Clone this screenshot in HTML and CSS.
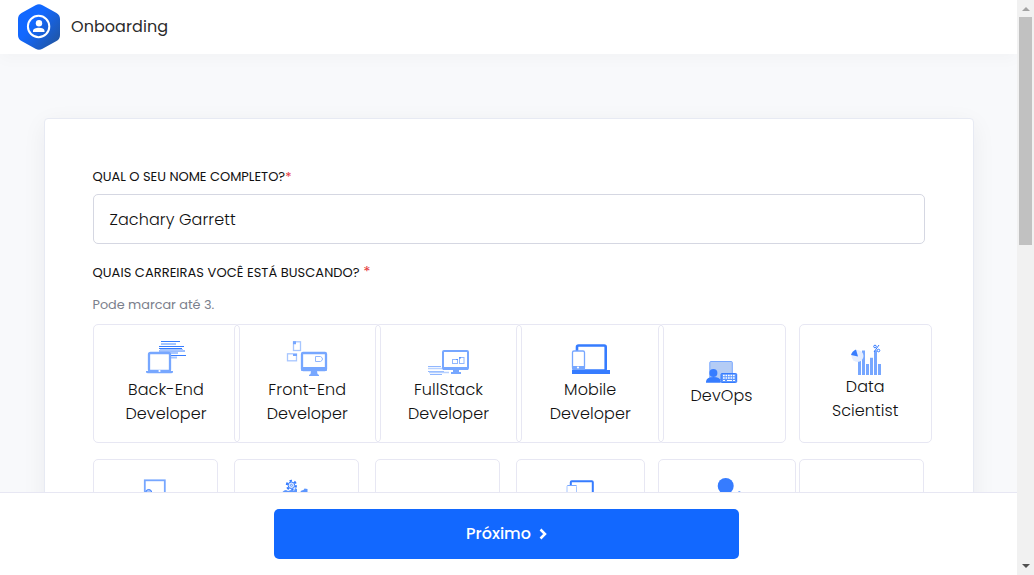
FILE: index.html
```html
<!DOCTYPE html>
<html lang="pt-BR">
<head>
<meta charset="utf-8">
<title>Onboarding</title>
<link rel="stylesheet" href="styles.css">
</head>
<body>
<div class="window">
  <div class="page">
    <header class="header">
      <svg class="logo" width="42" height="46" viewBox="0 0 42 46">
        <defs><linearGradient id="hex" x1="0.2" y1="0.2" x2="1" y2="0.9"><stop offset="0.25" stop-color="#1268ff"/><stop offset="1" stop-color="#22549c"/></linearGradient></defs>
        <path d="M17.5 1.3Q21 -.7 24.500 1.300L38.500 9Q42 11 42 15V31Q42 35 38.500 37L24.500 44.700Q21 46.700 17.500 44.700L3.500 37Q0 35 0 31V15Q0 11 3.500 9Z" fill="url(#hex)"/>
        <circle cx="20.600" cy="22.500" r="10.700" fill="none" stroke="#fff" stroke-width="2"/>
        <circle cx="21" cy="19.300" r="3.200" fill="#fff"/>
        <path d="M15 28v-1.300c0-2 3-3 6-3s5.500 1 5.500 3V28z" fill="#fff"/>
      </svg>
      <h1 class="title">Onboarding</h1>
    </header>
    <main class="main">
      <form class="panel">
        <label class="label name-label">QUAL O SEU NOME COMPLETO?<span class="required">*</span></label>
        <div class="input"><span class="input-text">Zachary Garrett</span></div>
        <div class="label career-label">QUAIS CARREIRAS VOCÊ ESTÁ BUSCANDO? <span class="required star">*</span></div>
        <p class="hint">Pode marcar até 3.</p>
        <div class="careers">
          <div class="card wide">
            <svg width="45" height="37" viewBox="144 341 45 37">
              <path d="M161 341.500h19M159 346.500h25M159 348.500h23M159 351h26M170 355.500h16" stroke="#367cff" stroke-width="1"/>
              <path d="M161 344h15M160 350h23M168 353h10M170 357.500h7" stroke="#a7c6ff" stroke-width="1.800"/>
              <rect x="149" y="353" width="21" height="18" rx="1.500" fill="#fff" stroke="#77a7ff" stroke-width="2.300"/>
              <path d="M146 371h27v1q0 1.300-2 1.300h-23q-2 0-2-1.300z" fill="#77a7ff"/><circle cx="159.500" cy="371" r="1.100" fill="#fff"/>
            </svg>
            <span class="name"><span>Back-End</span><span>Developer</span></span>
          </div>
          <div class="card wide">
            <svg width="45" height="37" viewBox="285 341 45 37">
              <g fill="none" stroke="#a7c6ff" stroke-width="1.300"><rect x="293.500" y="341.800" width="7" height="8.700"/><rect x="287.500" y="353.800" width="9" height="7"/></g>
              <path d="M293 341.300h3v3h-3zM293 354h4v2h-4z" fill="#77a7ff"/>
              <rect x="302" y="353" width="24" height="17" rx="1" fill="#fff" stroke="#77a7ff" stroke-width="2.300"/>
              <path d="M301 367h26v3q0 1-1 1h-24q-1 0-1-1zM311 371h6l.5 3 1.500 1v1h-10v-1l1.500-1z" fill="#77a7ff"/>
              <path d="M315.500 356.500h5q2 1 2 2.500t-2 2.500h-5z" fill="#fff" stroke="#91b7ff"/>
            </svg>
            <span class="name"><span>Front-End</span><span>Developer</span></span>
          </div>
          <div class="card wide">
            <svg width="45" height="37" viewBox="426 341 45 37">
              <path d="M428 366.500h13M428 371.500h16M430 374.500h12" stroke="#91b7ff"/><path d="M428 368.500h19M429 372.500h20" stroke="#b8d1ff" stroke-width="1.400"/>
              <rect x="443" y="351" width="25" height="18" rx="1" fill="#fff" stroke="#77a7ff" stroke-width="2"/>
              <path d="M443 367h25v3h-25zM453 370h6v2h2v2h-10v-2h2z" fill="#77a7ff"/>
              <g fill="none" stroke="#91b7ff"><rect x="452.500" y="359.500" width="5" height="4"/><rect x="459.500" y="357.500" width="4.500" height="6"/></g><path d="M456 359h2v1h-2zM459 357h2v1.500h-2z" fill="#5b96ff"/>
            </svg>
            <span class="name"><span>FullStack</span><span>Developer</span></span>
          </div>
          <div class="card wider">
            <svg width="45" height="37" viewBox="568 340.500 45 37">
              <rect x="577" y="345" width="28.700" height="25" rx="1.500" fill="#fff" stroke="#367cff" stroke-width="2.600"/><path d="M572 369.500h38v4h-38z" fill="#367cff"/>
              <rect x="572.500" y="350.500" width="12" height="18" rx="1.500" fill="#fff" stroke="#77a7ff" stroke-width="1.300"/><path d="M572 365.500h13v3q0 1-1 1h-11q-1 0-1-1z" fill="#77a7ff"/><circle cx="578" cy="367" r="1.100" fill="#fff"/>
            </svg>
            <span class="name"><span>Mobile</span><span>Developer</span></span>
          </div>
          <div class="card devops">
            <svg width="45" height="25" viewBox="699 359 45 25">
              <rect x="709.800" y="361.500" width="22.500" height="18" rx="1" fill="#b4ccf5" stroke="#77a7ff"/><circle cx="713.400" cy="373" r="4" fill="#367cff"/><path d="M706 382.700v-1.500q1-4.200 7.500-4.200t7.200 4.200v1.500z" fill="#367cff"/>
              <rect x="721" y="373.500" width="15.700" height="9" rx="1" fill="#5b96ff" stroke="#367cff"/><path d="M723 375.500h12M723 378h12" stroke="#fff" stroke-width="1.700" stroke-dasharray="1.700 .8"/><path d="M723 380.500h2M727 380.500h5M733 380.500h2" stroke="#fff" stroke-width="1.200"/>
            </svg>
            <span class="name"><span>DevOps</span></span>
          </div>
          <div class="card data">
            <svg width="45" height="31" viewBox="843 344 45 31">
              <path d="M858 360h3v15H858zM862 350.500h3V375h-3zM866 364h3v11H866zM870 357.700h3V375H870zM874 350.500h3V375h-3zM878 364h3v11H878z" fill="#77a7ff"/><circle cx="857.500" cy="356" r="6" fill="#e4edff"/><path d="M858 356.500l-7-1.500q1-4 5-5.500z" fill="#367cff"/>
              <path d="M879 345l-5 7" stroke="#367cff"/><g fill="none" stroke="#367cff"><circle cx="875" cy="346.500" r="1.300"/><circle cx="878.500" cy="350.500" r="1.300"/></g>
            </svg>
            <span class="name"><span>Data</span><span>Scientist</span></span>
          </div>
          <div class="card lower"><svg width="45" height="33" viewBox="133 476 45 33"><rect x="144.800" y="480.300" width="20" height="18" fill="#fff" stroke="#77a7ff" stroke-width="1.800"/><circle cx="148.700" cy="492.500" r="3" fill="#a7c6ff" stroke="#367cff"/></svg></div>
          <div class="card lower"><svg width="45" height="33" viewBox="274 476 45 33"><circle cx="291.400" cy="485.300" r="4.600" fill="none" stroke="#367cff" stroke-width="2" stroke-dasharray="2.400 2.417"/><circle cx="291.400" cy="485.300" r="3.300" fill="#d8e6ff" stroke="#367cff"/><circle cx="291.400" cy="485.300" r="1" fill="#fff" stroke="#367cff" stroke-width=".7"/><path d="M282 492.500q2-2.500 4-2.500l2 1 3-1 3 1 1-3 2 1v4h-15zM300 492.500q1-2.500 3.500-2.500l1-1.500 3 .5v4h-3l-1-1-1 1z" fill="#5b96ff"/></svg></div>
          <div class="card lower"></div>
          <div class="card lower lower-mobile"><svg width="45" height="33" viewBox="557.500 476 45 33"><rect x="570.300" y="481.300" width="22" height="18" rx="1" fill="#fff" stroke="#367cff" stroke-width="2"/><rect x="566.500" y="485.500" width="9.500" height="15" rx="1" fill="#fff" stroke="#a7c6ff"/><path d="M567 485.500h9" stroke="#77a7ff"/></svg></div>
          <div class="card lower lower-person"><svg width="45" height="33" viewBox="703.500 476 45 33"><circle cx="725.200" cy="486" r="8" fill="#367cff"/><path d="M737 492.500q2-3 3.500 0z" fill="#77a7ff"/></svg></div>
          <div class="card lower"></div>
        </div>
      </form>
    </main>
    <footer class="footer">
      <button class="next"><span class="next-text">Próximo</span><svg width="8" height="12" viewBox="0 0 8 12"><path d="M1.500 1.500L6 6l-4.500 4.500" fill="none" stroke="#fff" stroke-width="2.500"/></svg></button>
    </footer>
  </div>
  <div class="scrollbar"><span class="arrow up"></span><span class="thumb"></span><span class="arrow down"></span></div>
</div>
</body>
</html>
```
FILE: styles.css
```css
* { box-sizing: border-box; }
body { margin: 0; font-family: Poppins, Inter, "Open Sans", sans-serif; font-size: 16px; font-weight: 300; color: #161c2d; }
.window { display: flex; width: 1034px; height: 575px; overflow: hidden; }
.page { display: flex; flex-direction: column; width: 1017px; height: 575px; background: #f8f9fb; }
.header { display: flex; flex: none; align-items: center; gap: 11px; height: 54px; padding-left: 18px; background: #fff; box-shadow: 0 6px 14px rgba(22, 28, 45, .025); }
.title { margin: 0; font-size: 16px; line-height: 24px; font-weight: 400; color: #2b2b2b; letter-spacing: .06px; }
.main { height: 438px; padding: 64px 43.500px 0 43.500px; overflow: hidden; }
.panel { height: 700px; padding: 48px; background: #fff; border: 1px solid #e7eaf3; border-radius: 4px; box-shadow: 0 6px 24px rgba(22, 28, 45, .06); }
.label { display: block; font-size: 13px; line-height: 20px; font-weight: 400; color: #111; white-space: nowrap; }
.name-label { letter-spacing: -.02px; }
.career-label { letter-spacing: .045px; }
.required { color: #e5383b; }
.star { font-size: 15px; }
.input { display: flex; align-items: center; height: 50px; margin: 7px 0 18px; padding: 0 16px; border: 1px solid #d5d7e2; border-radius: 5px; color: #111; }
.input-text { letter-spacing: .08px; }
.hint { margin: 12px 0 9px; font-size: 12.800px; line-height: 20px; font-weight: 400; color: #7b808c; }
.careers { display: grid; grid-template-columns: repeat(6, 141.250px); grid-template-rows: 119px 119px; row-gap: 16px; }
.card { display: flex; flex-direction: column; align-items: center; justify-content: center; border: 1px solid #e7e7f3; border-radius: 5px; color: #111; }
.card svg { flex: none; display: block; }
.wide { width: 147px; }
.wider { width: 148px; }
.devops { width: 128px; }
.data { width: 133px; }
.lower { width: 125px; justify-content: flex-start; padding-top: 16px; }
.lower-mobile { width: 129px; }
.lower-person { width: 138px; }
.name { display: flex; flex-direction: column; align-items: center; line-height: 24px; letter-spacing: .08px; }
.footer { flex: none; height: 83px; padding: 16px 0 0 274px; background: #fff; border-top: 1px solid #e7e7f3; }
.next { display: flex; align-items: center; justify-content: center; gap: 8px; width: 465px; height: 50px; padding: 0 0 1px; border: 0; border-radius: 5px; background: #1268ff; color: #fff; font: inherit; font-weight: 500; }
.scrollbar { display: flex; flex-direction: column; align-items: center; width: 17px; background: #f1f1f1; }
.thumb { width: 13px; height: 228px; margin-bottom: 319px; background: #c1c1c1; }
.arrow { border: 4px solid transparent; border-top-width: 0; border-bottom-width: 0; }
.up { margin: 7px 0 6px; border-bottom: 4px solid #a3a3a3; }
.down { border-top: 4px solid #505050; }
```
